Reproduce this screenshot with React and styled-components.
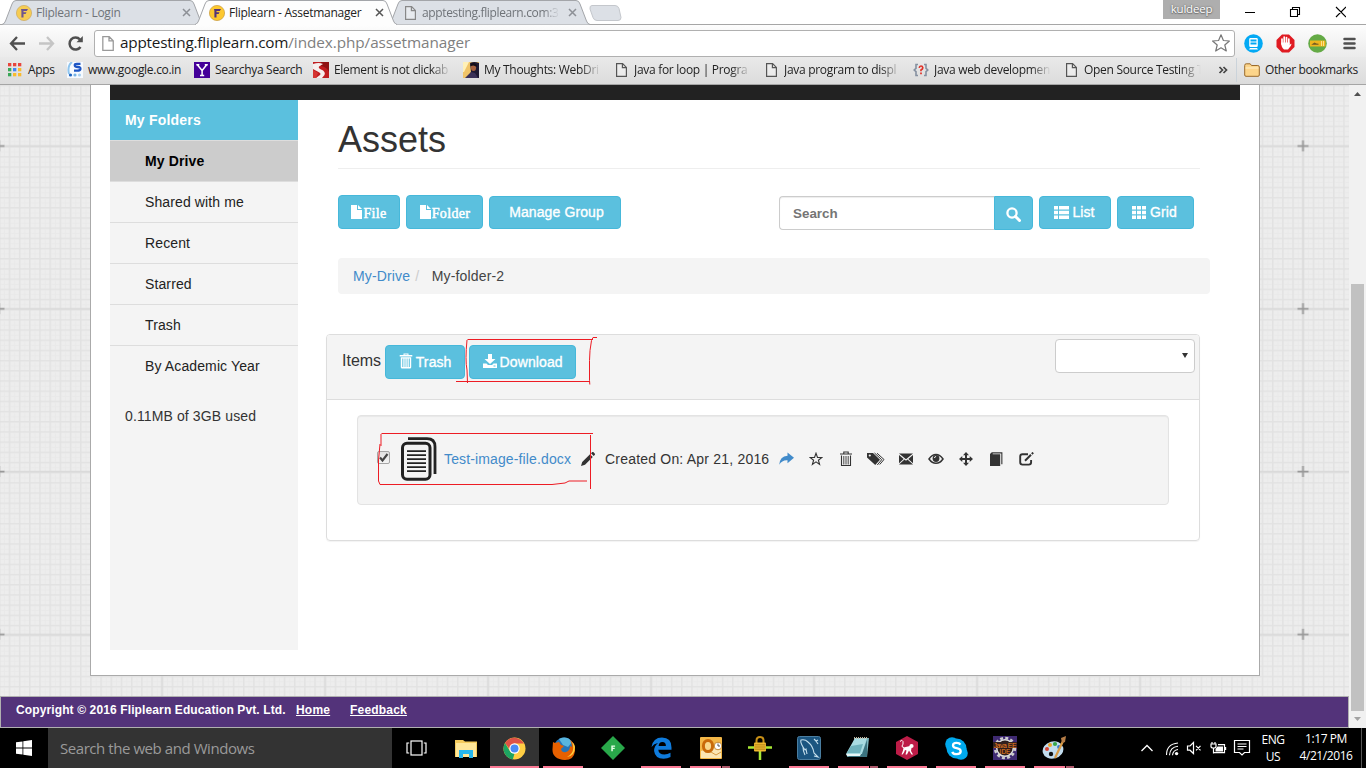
import React from "react";
import styled, { createGlobalStyle, css } from "styled-components";

const arial = `"Liberation Sans", Arial, sans-serif`;
const segoe = `"Open Sans", "Noto Sans", sans-serif`;

const GlobalStyle = createGlobalStyle`
  *, *::before, *::after { box-sizing: border-box; }
  body { margin: 0; overflow: hidden; background: #fff; font-family: ${arial}; }
  svg { display: block; flex: none; }
`;

const Screen = styled.div`
  position: relative;
  width: 1366px;
  height: 768px;
  display: flex;
  flex-direction: column;
  overflow: hidden;
`;

/* ---------- browser frame ---------- */
const TabStrip = styled.div`
  height: 25px;
  flex: none;
  display: flex;
  padding-left: 2px;
  background: #fff;
  border-bottom: 1px solid #a6a6a6;
`;
const TabBox = styled.div`
  position: relative;
  z-index: ${(p) => (p.$active ? 2 : 1)};
  width: 193px;
  height: 25px;
  flex: none;
  display: flex;
  align-items: center;
  padding-left: 14px;
  font: 12px/16px ${segoe};
  letter-spacing: ${(p) => p.$track || "-0.25px"};
  color: ${(p) => (p.$active ? "#222" : "#6f7378")};
`;
const TabShape = styled.svg`
  position: absolute;
  left: 0;
  top: 0;
  z-index: -1;
`;
const TabLabel = styled.span`
  width: 142px;
  margin: 0 4px;
  flex: none;
  white-space: nowrap;
  ${(p) => p.$fade && css`mask-image: linear-gradient(90deg, #000 85%, transparent 97%);`}
`;
const NewTab = styled.svg`
  margin: 5px 0 0 8px;
`;
const WindowControls = styled.div`
  margin-left: auto;
  padding-right: 20px;
  display: flex;
  align-items: flex-start;
`;
const UserBadge = styled.div`
  width: 57px;
  height: 19px;
  margin-right: 25px;
  background: #aeaeae;
  color: #fff;
  text-align: center;
  font: 11.5px/18px ${segoe};
  letter-spacing: -0.2px;
  text-shadow: 0 0 2px #555, 0 1px 1px #777;
`;
const Toolbar = styled.div`
  height: 32px;
  flex: none;
  display: flex;
  align-items: center;
  padding: 4px 5px 0 9px;
  background: linear-gradient(#fdfdfd, #ebebeb);
`;
const NavIcons = styled.div`
  display: flex;
  gap: 12px;
  width: 85px;
  flex: none;
`;
const AddressBar = styled.div`
  width: 1141px;
  height: 27px;
  flex: none;
  display: flex;
  align-items: center;
  padding: 0 4px 0 4px;
  border: 1px solid #b0b0b0;
  border-radius: 3px;
  background: #fff;
  font: 15.3px/24px ${segoe};
  letter-spacing: -0.2px;
  color: #1a1a1a;
`;
const Url = styled.span`
  flex: 1;
  margin-left: 4px;
  padding-bottom: 2px;
  white-space: nowrap;
`;
const UrlPath = styled.span`
  color: #808080;
  letter-spacing: -0.06px;
`;
const Extensions = styled.div`
  display: flex;
  gap: 13px;
  margin-left: 9px;
`;
const BookmarkBar = styled.div`
  height: 28px;
  flex: none;
  display: flex;
  align-items: center;
  padding: 0 0 1px 7px;
  background: linear-gradient(#e9e9e9, #dcdcdc);
  border-bottom: 1px solid #a5a5a5;
  font: 12px/16px ${segoe};
  color: #222;
`;
const Bookmark = styled.div`
  width: ${(p) => p.$w}px;
  flex: none;
  display: flex;
  align-items: center;
  gap: 5px;
`;
const BookmarkLabel = styled.span`
  width: 118px;
  flex: none;
  white-space: nowrap;
  letter-spacing: -0.3px;
  ${(p) => p.$fade && css`mask-image: linear-gradient(90deg, #000 82%, transparent 99%);`}
`;
const OtherBookmarks = styled.div`
  display: flex;
  align-items: center;
  gap: 5px;
  height: 24px;
  margin-left: 5px;
  padding-left: 7px;
  border-left: 1px solid #cbd3da;
  white-space: nowrap;
  letter-spacing: -0.38px;
`;

/* ---------- page ---------- */
const Viewport = styled.div`
  height: 643px;
  flex: none;
  display: flex;
`;
const Page = styled.div`
  position: relative;
  width: 1349px;
  display: flex;
  flex-direction: column;
  align-items: center;
  background: #ededed;
`;
const Backdrop = styled.svg`
  position: absolute;
  inset: 0;
`;
const Container = styled.div`
  position: relative;
  width: 1170px;
  height: 591px;
  margin-left: 1px;
  padding: 0 19px;
  background: #fff;
  border: solid #aaa;
  border-width: 0 1px 1px;
`;
const NavBar = styled.div`
  height: 15px;
  background: #222;
`;
const Columns = styled.div`
  display: flex;
`;
const Sidebar = styled.nav`
  width: 188px;
  height: 550px;
  background: #f4f4f4;
  font: 14px/20px ${arial};
  letter-spacing: 0.12px;
  color: #333;
`;
const SidebarTitle = styled.div`
  height: 40px;
  padding: 10px 15px;
  background: #5bc0de;
  color: #fff;
  font-weight: bold;
  letter-spacing: 0.2px;
`;
const SidebarItem = styled.div`
  height: 41px;
  padding: 10px 35px;
  border-top: 1px solid #ddd;
  color: #222;
  ${(p) => p.$active && css`background: #ccc; color: #000; font-weight: bold;`}
`;
const Usage = styled.div`
  padding: 20px 15px;
`;
const Main = styled.main`
  width: 912px;
  padding-left: 28px;
`;
const Title = styled.h1`
  width: 862px;
  height: 69px;
  margin: 0 0 0 12px;
  padding-top: 20px;
  border-bottom: 1px solid #eee;
  font: 36px/40px ${arial};
  color: #333;
`;
const Actions = styled.div`
  display: flex;
  align-items: flex-end;
  gap: 6px;
  height: 35px;
  width: 856px;
  margin: 26px 0 0 12px;
  padding-bottom: 1px;
`;
const Button = styled.button`
  width: ${(p) => p.$w}px;
  height: ${(p) => p.$h || 33}px;
  flex: none;
  display: flex;
  align-items: center;
  justify-content: center;
  gap: ${(p) => p.$gap ?? 3}px;
  padding: 0 ${(p) => p.$back || 0}px 1px ${(p) => p.$shift || 0}px;
  border: 1px solid #46b8da;
  border-radius: 4px;
  background: #5bc0de;
  color: #fff;
  font: 14px/20px ${arial};
  letter-spacing: 0.1px;
  -webkit-text-stroke: 0.35px #fff;
  ${(p) =>
    p.$serif &&
    css`
      padding-top: 5px;
      font: 14px/20px "Liberation Serif", "Times New Roman", serif;
      letter-spacing: 0.35px;
      -webkit-text-stroke: 0.5px #fff;
      svg { margin-top: -4px; }
    `}
`;
const SearchGroup = styled.div`
  display: flex;
  width: 254px;
  height: 34px;
  margin: 0 0 -1px auto;
`;
const SearchInput = styled.div`
  flex: 1;
  padding: 0 13px;
  border: 1px solid #ccc;
  border-right: 0;
  border-radius: 4px 0 0 4px;
  box-shadow: inset 0 1px 1px rgba(0, 0, 0, 0.075);
  font: bold 13.4px/33px ${arial};
  color: #757575;
`;
const SearchButton = styled(Button)`
  height: 34px;
  padding-top: 3px;
  border-radius: 0 4px 4px 0;
`;
const Breadcrumb = styled.div`
  width: 872px;
  height: 36px;
  margin: 28px 0 0 12px;
  padding: 8px 15px;
  background: #f4f4f4;
  border-radius: 4px;
  font: 14px/20px ${arial};
  letter-spacing: 0.15px;
  color: #444;
`;
const Link = styled.a`
  color: #428bca;
`;
const Slash = styled.span`
  margin: 0 12.5px 0 5px;
  color: #ccc;
`;
const Panel = styled.section`
  width: 874px;
  height: 207px;
  margin-top: 40px;
  border: 1px solid #ddd;
  border-radius: 4px;
  box-shadow: 0 1px 1px rgba(0, 0, 0, 0.05);
`;
const PanelHeader = styled.div`
  height: 65px;
  display: flex;
  align-items: flex-start;
  gap: 4px;
  padding: 10px 4px 0 15px;
  background: #f4f4f4;
  border-bottom: 1px solid #ddd;
  border-radius: 3px 3px 0 0;
  font: 16px/32px ${arial};
  color: #333;
  button svg { margin-top: -2px; }
`;
const Select = styled.div`
  width: 140px;
  height: 34px;
  margin: -6px 0 0 auto;
  padding: 0 6px 1px 0;
  display: flex;
  align-items: center;
  justify-content: flex-end;
  border: 1px solid #ccc;
  border-radius: 4px;
  background: #fff;
`;
const FileRow = styled.div`
  height: 90px;
  margin: 15px 30px 0;
  padding: 0 0 2px 19px;
  display: flex;
  align-items: center;
  background: #f4f4f4;
  border: 1px solid #e3e3e3;
  border-radius: 4px;
  box-shadow: inset 0 1px 1px rgba(0, 0, 0, 0.05);
  font: 14px/20px ${arial};
  letter-spacing: 0.2px;
  color: #333;
`;
const Checkbox = styled.span`
  width: 13px;
  height: 13px;
  margin: -3px 11px 0 0;
  border: 1px solid #a5a5a5;
  border-radius: 2px;
  background: linear-gradient(#e0e0e0, #f4f4f4);
`;
const FileName = styled(Link)`
  width: 127px;
  margin: 0 10px 0 7px;
  letter-spacing: 0.13px;
  white-space: nowrap;
`;
const Created = styled.span`
  width: 166px;
  margin-left: 10px;
  white-space: nowrap;
`;
const FileActions = styled.div`
  display: flex;
  color: #333;
`;
const FileAction = styled.span`
  width: 30px;
  display: flex;
  align-items: center;
  justify-content: center;
`;
const Footer = styled.footer`
  position: relative;
  width: 100%;
  height: 32px;
  margin-top: auto;
  padding: 5px 15px;
  display: flex;
  border: 1px solid #b0b0b0;
  background: #53337a;
  color: #fff;
  font: bold 12px/16px ${arial};
  letter-spacing: 0.12px;
`;
const FooterText = styled.span`
  width: 280px;
  white-space: nowrap;
`;
const FooterLink = styled.a`
  width: 54px;
  letter-spacing: 0.2px;
  text-decoration: underline;
`;
const Scrollbar = styled.div`
  width: 17px;
  display: flex;
  flex-direction: column;
  align-items: center;
  padding: 7px 0;
  background: #f1f1f1;
`;
const Thumb = styled.div`
  width: 13px;
  height: 427px;
  margin: auto 0 6px;
  background: #c1c1c1;
`;
const Markup = styled.svg`
  position: absolute;
  left: 370px;
  top: 330px;
  fill: none;
  stroke: #ed1c24;
`;

/* ---------- taskbar ---------- */
const Taskbar = styled.div`
  height: 40px;
  flex: none;
  display: flex;
  background: #000;
  color: #fff;
`;
const Start = styled.div`
  width: 48px;
  display: flex;
  align-items: center;
  justify-content: center;
`;
const TaskSearch = styled.div`
  width: 344px;
  padding-left: 12px;
  background: #333;
  color: #9a9a9a;
  font: 15px/40px ${segoe};
  letter-spacing: -0.44px;
`;
const Slot = styled.div`
  position: relative;
  width: 49.07px;
  display: flex;
  align-items: center;
  justify-content: center;
  background: ${(p) => (p.$current ? "#333" : "none")};
  &::after {
    content: "";
    position: absolute;
    bottom: 0;
    left: ${(p) => (p.$current ? 0 : 4)}px;
    right: ${(p) => (p.$current ? 0 : 5)}px;
    height: 2px;
    background: ${(p) =>
      !p.$open ? "none" : p.$stack ? "linear-gradient(90deg, #fb7a95 31px, #000 31px 32px, #ae5a6c 32px)" : "#fb7a95"};
  }
`;
const Tray = styled.div`
  display: flex;
  align-items: center;
  margin-left: auto;
  padding-right: 4px;
  font: 12px/17px ${segoe};
  letter-spacing: -0.45px;
  text-align: center;
`;
const TrayIcons = styled.div`
  display: flex;
  align-items: center;
  gap: 6.5px;
`;
const Language = styled.div`
  width: 44px;
  margin-top: -1px;
`;
const Clock = styled.div`
  width: 62px;
  height: 40px;
  margin-right: 4px;
  padding-top: 2px;
  letter-spacing: -0.42px;
`;
const ShowDesktop = styled.div`
  width: 1px;
  height: 40px;
  background: #555;
`;

/* ---------- icons ---------- */
const Icon = ({ s = 14, w, h, box, children, fill = "currentColor", ...rest }) => (
  <svg width={w || s} height={h || s} viewBox={box || `0 0 ${w || s} ${h || s}`} fill={fill} {...rest}>
    {children}
  </svg>
);
const FlipIcon = ({ dim }) => (
  <Icon s={16} opacity={dim ? 0.8 : 1}>
    <circle cx="8" cy="8" r="7.6" fill="#fdc82f" stroke="#c99b3c" strokeWidth=".7" />
    <path d="M5 4h7l-1.2 2H7.5v1.3h3L9.6 9H7.5v3.5H5.4V6z" fill="#53337a" />
  </Icon>
);
const PageIcon = ({ color = "#555", w = 16, h = 16 }) => (
  <Icon w={w} h={h} box="0 0 16 16" fill="none" stroke={color} strokeWidth="1.2">
    <path d="M3.6 1.6h6l3.8 3.8v9H3.6zM9.4 1.8v3.8h3.8" fill="#fff" fillOpacity=".35" />
  </Icon>
);
const CloseIcon = ({ color }) => (
  <Icon s={9} fill="none" stroke={color} strokeWidth="1.5"><path d="M1 1l7 7M8 1L1 8" /></Icon>
);
const FileGlyph = () => <Icon w={11} h={14}><path d="M0 0h6v5h5v9H0zM7 0l4 4H7z" /></Icon>;
const TrashGlyph = () => (
  <Icon w={14} h={16} box="0 0 14 16">
    <path d="M4.5 2V.5h5V2h3.800v1.500H.7V2zM5.500 2h3v-.6h-3zM1.800 4.200h10.400v10q0 1.300-1.300 1.300H3.100q-1.300 0-1.300-1.300zM3.300 5.500v8.500h1V5.500zm2.300 0v8.500h.8V5.500zm2.100 0v8.500h.8V5.500zM9.800 5.500v8.500h1V5.500z" fillRule="evenodd" />
  </Icon>
);
const DownloadGlyph = () => (
  <Icon s={14}><path d="M5 0h4v5h3.5L7 10 1.5 5H5zM0 9.5h3.5L5 11h4l1.5-1.5H14V14H0zm10.5 2v1h2v-1z" fillRule="evenodd" /></Icon>
);
const SearchGlyph = () => (
  <Icon s={15} fill="none" stroke="#fff"><circle cx="6" cy="6" r="4.6" strokeWidth="2.3" /><path d="M9.5 9.5l4 4" strokeWidth="3" strokeLinecap="round" /></Icon>
);
const ListGlyph = () => (
  <Icon w={15} h={13}><path d="M0 0h4v3.5H0zM5 0h10v3.5H5zM0 4.7h4v3.6H0zM5 4.7h10v3.6H5zM0 9.5h4V13H0zM5 9.5h10V13H5z" /></Icon>
);
const GridGlyph = () => (
  <Icon w={14} h={13}><path d="M0 0h4v3.5H0zM5 0h4v3.5H5zM10 0h4v3.5h-4zM0 4.7h4v3.6H0zM5 4.7h4v3.6H5zM10 4.7h4v3.6h-4zM0 9.5h4V13H0zM5 9.5h4V13H5zM10 9.5h4V13h-4z" /></Icon>
);
const DocumentIcon = () => (
  <Icon w={36} h={44} fill="none" stroke="#222">
    <path d="M7 1.7h19q8 0 8 8V37" strokeWidth="2.8" />
    <rect x="1.5" y="6.2" width="27.5" height="36" rx="4.5" strokeWidth="3" />
    <path d="M6 14.2h19M6 18.2h19M6 22.2h19M6 26.2h19M6 30.2h19M6 34.2h19" strokeWidth="1.8" />
  </Icon>
);
const PencilGlyph = () => (
  <Icon s={14}><path d="M0 14l1.2-4L9 2.2l2.8 2.8L4 12.8zM10 1.3L11.3 0q.5-.3 1 .1l1.6 1.6q.3.5 0 1L12.7 4z" /></Icon>
);

const fileActions = [
  <Icon key="share" fill="#428bca" w={15} h={14}><path d="M8.5.5L15 5.800l-6.500 5.400V8.200Q3 7.800.2 12.700.8 4.400 8.500 3.700z" /></Icon>,
  <Icon key="star" fill="none" stroke="#333" strokeWidth="1.1" w={14} h={14}><path d="M7 1.2l1.5 4.2 4.4.1-3.5 2.7 1.2 4.3L7 9.9l-3.6 2.6 1.2-4.3L1.1 5.5l4.4-.1z" /></Icon>,
  <Icon key="trash" w={14} h={16} fill="none" stroke="#333"><path d="M1 3h12M4.800 2.500V1h4.400v1.500M2.500 4.500V14.500h9V4.500" strokeWidth="1.1" /><path d="M4.800 5v8.500M7 5v8.500M9.200 5v8.500" strokeWidth=".9" /></Icon>,
  <Icon key="tags" w={18} h={14}><path d="M0 1h6l7 6.8L8.2 13 0 5.5zM2.8 2.4a1.1 1.1 0 100 2.2 1.1 1.1 0 000-2.2z" fillRule="evenodd" /><path d="M7.500 1l7.200 6.700L10.300 13" fill="none" stroke="#333" strokeWidth="1" /><path d="M10 1.200l7 6.300-4.300 5" fill="none" stroke="#333" strokeWidth="1" /></Icon>,
  <Icon key="mail" s={14}><path d="M0 1.5h14L7 7.2zM0 3l4.700 4L0 11.300zM14 3v8.300L9.300 7zM5.500 7.600L7 8.800l1.500-1.200 5.500 5H0z" /></Icon>,
  <Icon key="eye" w={16} h={14} fill="none" stroke="#333"><path d="M1 7q3-4.500 7-4.500T15 7q-3 4.300-7 4.300T1 7z" strokeWidth="1.500" /><circle cx="8" cy="6.500" r="3.400" fill="#333" stroke="none" /><path d="M6.400 6q.2-1.500 1.700-1.500" stroke="#fff" strokeWidth=".9" /></Icon>,
  <Icon key="move" s={14}><path d="M7 0l3 3.300H8v2.800h2.700V4L14 7l-3.300 3V8H8v2.700h2L7 14l-3-3.300h2V8H3.300v2L0 7l3.300-3v2.100H6V3.300H4z" /></Icon>,
  <Icon key="book" w={14} h={14}><path d="M2.800.3h10.600v12h-1.100V1.400H3.700v.8h7.500V14H1V2z" /></Icon>,
  <Icon key="edit" w={15} h={14} fill="none" stroke="#333"><path d="M9 2.200H3.500Q1.200 2.200 1.200 4.500v5.800q0 2.300 2.300 2.300h6.300q2.300 0 2.300-2.300V8" strokeWidth="1.900" /><path d="M6 8.800L12 2.800M12.800 2l1.400-1.400" strokeWidth="2" /></Icon>,
];

const GraphPaper = () => (
  <Backdrop width="1349" height="643">
    <defs>
      <pattern id="minor" width="10.1875" height="10.1875" patternUnits="userSpaceOnUse" x="-1.5" y="61">
        <path d="M0 0V10.2M0 0H10.2" stroke="#e2e2e2" strokeWidth="3" />
        <path d="M6 2v8M2 6h8" stroke="#e9e9e9" strokeWidth=".8" />
      </pattern>
      <pattern id="major" width="163" height="162.8" patternUnits="userSpaceOnUse" x="-82.5" y="-20.5">
        <path d="M81.5 0V163M0 81.5H163" stroke="#dadada" strokeWidth="1.6" />
        <path d="M81.5 76V87M76 81.5H87" stroke="#999" strokeWidth="1.8" />
      </pattern>
    </defs>
    <rect width="1349" height="643" fill="url(#minor)" />
    <rect width="1349" height="643" fill="url(#major)" />
  </Backdrop>
);

const Tab = ({ active, icon, label, track, fade }) => (
  <TabBox $active={active} $track={track}>
    <TabShape width="204" height="25">
      <path
        d="M0 24.5Q2.5 24 3.5 21L10 4Q11 .5 14 .5H188Q191 .5 192 4L198.5 21Q199.5 24 202 24.5"
        fill={active ? "#fdfdfd" : "#dce0e6"}
        stroke="#a3a5a9"
      />
      {active && <path d="M1 24.5H201" stroke="#fdfdfd" />}
    </TabShape>
    {icon}
    <TabLabel $fade={fade}>{label}</TabLabel>
    <CloseIcon color={active ? "#555" : "#8d9096"} />
  </TabBox>
);

const bookmarks = [
  { w: 60, label: "Apps", icon: (
    <Icon s={16}>{[0, 1, 2].map((r) => [0, 1, 2].map((c) => (
      <rect key={`${r}${c}`} x={1 + c * 5} y={1 + r * 5} width="3.3" height="3.3" fill={[["#e8453c", "#e8453c", "#e8453c"], ["#3aa757", "#4285f4", "#f9bb2d"], ["#3aa757", "#f9bb2d", "#f9bb2d"]][r][c]} />
    )))}</Icon>) },
  { w: 127, label: "www.google.co.in", icon: (
    <Icon s={16}><rect width="16" height="16" fill="#f6faff" /><path d="M5 0Q0 4 2 12" fill="none" stroke="#8fc5ee" strokeWidth="2" /><path d="M13.500 1.800H9.800Q7.500 1.800 7.800 3.500 8 4.800 11 5q2.800.3 2.400 2.100-.4 1.500-3 1.500H7" fill="none" stroke="#1d55c4" strokeWidth="2.300" /><circle cx="3.500" cy="13" r="1.600" fill="#1d66c4" /><circle cx="8" cy="13" r="1.600" fill="#74b2e6" /><circle cx="12.500" cy="13" r="1.600" fill="#a9d0f0" /></Icon>) },
  { w: 119, label: "Searchya Search", icon: (
    <Icon s={16}><rect width="16" height="16" fill="#440099" /><path d="M3.5 3l4.6 5.5L12.5 3M8.1 8v5.5M2.3 2.8h3M10.8 2.8h3M6 13.5h4.2" fill="none" stroke="#fff" strokeWidth="1.5" /></Icon>) },
  { w: 150, fade: true, label: "Element is not clickab", icon: (
    <Icon s={16}><rect width="16" height="16" fill="#c01d20" /><path d="M8 0h8v10q-2-5-8-6z" fill="#8f1213" /><path d="M0 2q6-2 10 0L6 4.500q-1 1.500 2 3 5 2 3.500 5.500L9 16H3l4-3q1.500-1.500-1.500-3L0 7z" fill="#f6efee" /><path d="M0 8l5 3-2 5H0z" fill="#d53531" /></Icon>) },
  { w: 150, fade: true, label: "My Thoughts: WebDri", icon: (
    <Icon s={16}><rect width="16" height="16" fill="#f0c469" /><path d="M0 0h6L1 10H0z" fill="#fff0b8" /><path d="M7 1q4-2 9 0v15H5l3-6z" fill="#1e1a33" /><ellipse cx="10.500" cy="5.500" rx="2.600" ry="3.500" fill="#a8623f" /><path d="M7 3q3-4 7 0l-.5 2Q11 2.500 8 4z" fill="#120d18" /><path d="M2 16l6-6 4 1 3 5z" fill="#3a3158" /></Icon>) },
  { w: 150, fade: true, label: "Java for loop | Progra", icon: <PageIcon /> },
  { w: 150, fade: true, label: "Java program to displ", icon: <PageIcon /> },
  { w: 150, fade: true, label: "Java web developmen", icon: (
    <Icon s={16} fill="none"><path d="M5 2.5H3v3.8L1.2 8 3 9.7v3.8h2M11 2.5h2v3.8L14.8 8 13 9.7v3.8h-2" stroke="#8590a0" strokeWidth="1.6" /><path d="M6.2 5.8Q6.5 4 8 4t1.8 1.7Q9.8 7 8 8v1.3M8 10.5v1.800" stroke="#e03128" strokeWidth="1.7" /></Icon>) },
  { w: 153, fade: true, label: "Open Source Testing T", icon: <PageIcon /> },
];

const apps = [
  { icon: <Icon w={22} h={16} fill="none" stroke="#fff" strokeWidth="1.2"><rect x="5" y="1" width="11" height="14" /><path d="M3.200 3H1v10h2.200M17.800 3H20v10h-2.200" /></Icon> },
  { icon: <Icon w={22} h={19}><path d="M0 1h8l2 1.5h12V18H0z" fill="#f5cb5c" /><path d="M1 4h20v14H1z" fill="#ffe79a" /><path d="M4 19v-8h14v8h-4v-4H8v4z" fill="#26b7ee" /></Icon> },
  { current: true, open: true, icon: <Icon s={23}><circle cx="11.5" cy="11.5" r="11" fill="#ffce44" /><path d="M2 6A11 11 0 0121 6.5H11.5L8 14z" fill="#de5246" /><path d="M2 6l5.5 9 4 1.5L9.8 22.4A11 11 0 012 6z" fill="#1da462" /><circle cx="11.5" cy="11.5" r="5.2" fill="#fff" /><circle cx="11.5" cy="11.5" r="4" fill="#4a8af4" /></Icon> },
  { open: true, icon: <Icon s={23}><circle cx="12" cy="11" r="10.4" fill="#2574b8" /><path d="M7 2q8-4 13 3l-4 5-5-2z" fill="#58b5df" /><path d="M1 5l2 1 4-1 2 3 3 1-3 3q1 4 5 3 4-1 4-6l2 1q0-4-2-7 6 4 5 11-1 9-10 9Q0 22 .5 12z" fill="#e66000" /><path d="M20 5q4 10-5 15 8-1 8-10 0-3-3-5z" fill="#ffcb3c" /></Icon> },
  { icon: <Icon s={24}><path d="M12 0l12 12-12 12L0 12z" fill="#29a84a" /><path d="M10.300 9.500h3.800v1.300h-2.300v1h1.900v1.300h-1.900v2.200h-1.500z" fill="#e8ffe8" /></Icon> },
  { open: true, icon: <Icon w={21} h={22}><path d="M.5 10Q2 .5 11 .5q9.5 0 9.5 10v2.3H7.3q.3 4.7 6.2 4.7 3 0 6-1.7v4.3q-3 1.6-7 1.6-8.5 0-9.4-7.6Q3 9 7 6 3 6.6.5 10zM7.6 9h7.3q0-4-3.5-4T7.6 9z" fill="#0f7bdc" /></Icon> },
  { open: true, stack: true, icon: <Icon s={22}><rect width="22" height="22" rx="1" fill="#f3b748" /><path d="M1 14l20-5v12H1z" fill="#fbe6b4" /><ellipse cx="8" cy="9" rx="4.600" ry="5.600" fill="#f8d78c" stroke="#c96a0a" strokeWidth="3" /><circle cx="18" cy="9" r="3.800" fill="#fff" stroke="#c58a33" /><path d="M18 6.500V9h2" stroke="#555" fill="none" /><path d="M11 15l5 3 5-3" stroke="#d89b42" fill="none" /></Icon> },
  { icon: <Icon s={24}><path d="M0 11.500h24M12 14v10" stroke="#a8e835" strokeWidth="2.500" /><path d="M8.500 8V4.500Q8.500 1 12 1t3.500 3.500V8" fill="none" stroke="#c88f16" strokeWidth="2" /><rect x="6" y="6.500" width="12" height="9" rx="1" fill="#eeb72f" /><path d="M6.500 8.800h11M6.500 11h11M6.500 13.200h11" stroke="#a87914" strokeWidth=".8" /></Icon> },
  { open: true, icon: <Icon s={24}><rect x=".5" y=".5" width="23" height="23" rx="2" fill="#1b5580" stroke="#4a7d9f" /><path d="M8 19Q6 15 6 11 3 6 4 4q4-1 7 2 5 4 6 11l4 4-4-1M6 11l2 3 1-1 1 5M17 3l2 2 2-1M19 5l2 3" stroke="#c5dfec" fill="none" strokeWidth="1.100" /></Icon> },
  { open: true, stack: true, icon: <Icon w={24} h={22}><path d="M9 1h14l-2 19H1z" fill="#7bb5bd" /><path d="M9 1h12l-5 16H0z" fill="#a9dce2" /><path d="M0 17h16l5-14v17H3z" fill="#3c7480" /><path d="M5 9l12-2-3 9H1z" fill="#6fb3bd" /><path d="M0 17h15l-1 2H1z" fill="#e8f6f6" /><path d="M8 1h14" stroke="#bcb5a2" strokeWidth="2" strokeDasharray="1 1" /></Icon> },
  { open: true, icon: <Icon w={22} h={24}><path d="M11 0l11 6v12l-11 6L0 18V6z" fill="#bd1c47" /><path d="M4 5.500Q6 3 7 5.500q.5 3-1 4.500 0 1.500 2 1.500" stroke="#fff" strokeWidth="1" fill="none" /><path d="M7.500 11.500l6.500-1.500 1.500 2-.5 3 2 3.500h-1.500L13 14.500l-2 4H9.500l1-4-1.500-.5-1 2.500-1.500 2H5.500l1.500-4z" fill="#fff" /><circle cx="15.500" cy="10" r="2.100" fill="#fff" /></Icon> },
  { open: true, icon: <Icon s={23}><circle cx="7" cy="7" r="6.8" fill="#00a9ed" /><circle cx="16" cy="16" r="6.8" fill="#00a9ed" /><circle cx="11.5" cy="11.5" r="10" fill="#00a9ed" /><path d="M15.4 7.6Q14.4 5.8 11.5 5.8 8 5.8 8 8.4q0 2 3.7 2.8 4 .8 4 3.1 0 2.9-4 2.9-3.6 0-4.4-2.4" fill="none" stroke="#fff" strokeWidth="2.3" /></Icon> },
  { open: true, icon: <Icon s={24}><rect width="24" height="24" fill="#3f2a72" /><circle cx="12" cy="12" r="10" fill="none" stroke="#ccc" strokeWidth="2.500" strokeDasharray="3 2.230" /><circle cx="12" cy="12" r="8.300" fill="#2c1c1c" stroke="#ddd" strokeWidth="1.500" /><path d="M0 6h24v6H0z" fill="#33211f" /><text x="12" y="11.500" fill="#f58220" fontSize="6.800" textAnchor="middle" fontFamily="Liberation Sans" textLength="23">Java EE</text><text x="12" y="17.500" fill="#f58220" fontSize="6.500" textAnchor="middle" fontFamily="Liberation Sans">IDE</text></Icon> },
  { open: true, stack: true, icon: <Icon w={25} h={24}><ellipse cx="11" cy="14" rx="10.5" ry="8.5" fill="#c2dcee" transform="rotate(-15 11 14)" /><circle cx="5" cy="13" r="2" fill="#d84332" /><circle cx="8" cy="9" r="2" fill="#eca329" /><circle cx="13" cy="8" r="2.1" fill="#35a649" /><circle cx="17" cy="11" r="1.9" fill="#3278cc" /><circle cx="9" cy="18" r="2.2" fill="#111" /><path d="M22 3l-9 19" stroke="#d99b45" strokeWidth="2.2" /><path d="M20 7l-1-5 5-2-1 6z" fill="#b67d47" /></Icon> },
];

export default function App() {
  return (
    <Screen>
      <GlobalStyle />
      <TabStrip>
        <Tab icon={<FlipIcon dim />} label="Fliplearn - Login" />
        <Tab active icon={<FlipIcon />} label="Fliplearn - Assetmanager" />
        <Tab icon={<PageIcon color="#888" />} label="apptesting.fliplearn.com:3" track="-0.36px" fade />
        <NewTab width="34" height="17"><path d="M3 .5h23q3 0 4 3l2 9q0 3-3 3H8q-3 0-4-3L1 4Q.5.5 3 .5z" fill="#dce0e6" stroke="#c4c7cc" /></NewTab>
        <WindowControls>
          <UserBadge>kuldeep</UserBadge>
          <Icon w={101} h={24} fill="none" stroke="#000" strokeWidth="1.1">
            <path d="M0 12.5h10M45.5 9.5h7v7h-7zM47.5 9.5v-2h7v7h-2M91 7l10 10M101 7L91 17" />
          </Icon>
        </WindowControls>
      </TabStrip>
      <Toolbar>
        <NavIcons>
          <Icon s={17} fill="none" stroke="#505050" strokeWidth="2.3"><path d="M8 2L2 8.5 8 15M2 8.5h14" /></Icon>
          <Icon s={17} fill="none" stroke="#c5c5c5" strokeWidth="2.3"><path d="M9 2l6 6.5L9 15M15 8.5H1" /></Icon>
          <Icon s={17} fill="none" stroke="#505050" strokeWidth="2.5"><path d="M13.5 12A6 6 0 1113 4.5" /><path d="M9.5 7.2h6.3V1z" fill="#505050" stroke="none" /></Icon>
        </NavIcons>
        <AddressBar>
          <PageIcon color="#999" w={17} h={17} />
          <Url>apptesting.fliplearn.com<UrlPath>/index.php/assetmanager</UrlPath></Url>
          <Icon s={18} fill="none" stroke="#777" strokeWidth="1.2"><path d="M9 .8l2.4 5.7 6 .5-4.6 4 1.5 6L9 13.8 3.7 17l1.5-6-4.6-4 6-.5z" strokeLinejoin="round" /></Icon>
        </AddressBar>
        <Extensions>
          <Icon s={19}><circle cx="9.5" cy="9.5" r="9.3" fill="#03a9f4" /><path d="M6.500 4h6q1.300 0 1.300 1.300v6.400q0 1.300-1.300 1.300h-6q-1.300 0-1.300-1.300V5.300Q5.200 4 6.500 4zm0 1.600v2h6v-2zm0 3v2h6v-2zM6 14h7l1 1.500H5z" fill="#fff" fillRule="evenodd" /></Icon>
          <Icon s={19}><path d="M6 .5h7L18.5 6v7L13 18.5H6L.5 13V6z" fill="#e01b22" /><path d="M6 10V5M8.2 9V3M10.5 9V3.5M12.8 10V5" stroke="#fff" strokeWidth="1.7" strokeLinecap="round" /><path d="M5.2 8.5h8.4V11l1.5-1.4q.8 1-.4 2.4L12 15.5H8q-2.8-2-2.8-7z" fill="#fff" /></Icon>
          <Icon s={19}><circle cx="9.5" cy="9.5" r="9.3" fill="#64aa45" /><path d="M2 6.5h15.5v6H2z" fill="#efb51e" /><path d="M3.5 10.5l3-2 2 1 2 .2v1h-7z" fill="#725b24" /><path d="M13.5 7v5M15.5 7v5" stroke="#fbe08b" /></Icon>
          <Icon w={19} h={19} stroke="#505050" strokeWidth="2.5" strokeLinecap="round"><path d="M4.500 5h10M4.500 9.500h10M4.500 14h10" /></Icon>
        </Extensions>
      </Toolbar>
      <BookmarkBar>
        {bookmarks.map((b) => (
          <Bookmark key={b.label} $w={b.w}>
            {b.icon}
            <BookmarkLabel $fade={b.fade}>{b.label}</BookmarkLabel>
          </Bookmark>
        ))}
        <Icon w={15} h={12} fill="none" stroke="#444" strokeWidth="1.7"><path d="M3.5 3l3 3-3 3M7.5 3l3 3-3 3" /></Icon>
        <OtherBookmarks>
          <Icon w={16} h={14}><path d="M.7 2.5q0-1.7 1.5-1.7h4L7.5 2.5h6.3q1.5 0 1.5 1.5v8q0 1.3-1.3 1.3H2Q.7 13.3.7 12z" fill="#fcd58b" stroke="#9a6a2c" /><path d="M1.5 5h13" stroke="#fff0cc" /></Icon>
          Other bookmarks
        </OtherBookmarks>
      </BookmarkBar>

      <Viewport>
        <Page>
          <GraphPaper />
          <Container>
            <NavBar />
            <Columns>
              <Sidebar>
                <SidebarTitle>My Folders</SidebarTitle>
                <SidebarItem $active>My Drive</SidebarItem>
                <SidebarItem>Shared with me</SidebarItem>
                <SidebarItem>Recent</SidebarItem>
                <SidebarItem>Starred</SidebarItem>
                <SidebarItem>Trash</SidebarItem>
                <SidebarItem>By Academic Year</SidebarItem>
                <Usage>0.11MB of 3GB used</Usage>
              </Sidebar>
              <Main>
                <Title>Assets</Title>
                <Actions>
                  <Button $w={62} $h={34} $gap={1} $serif><FileGlyph />File</Button>
                  <Button $w={77} $h={34} $gap={1} $shift={1} $serif><FileGlyph />Folder</Button>
                  <Button $w={132} $shift={3}>Manage Group</Button>
                  <SearchGroup>
                    <SearchInput>Search</SearchInput>
                    <SearchButton $w={39}><SearchGlyph /></SearchButton>
                  </SearchGroup>
                  <Button $w={72} $back={1}><ListGlyph />List</Button>
                  <Button $w={77} $gap={4} $back={2}><GridGlyph />Grid</Button>
                </Actions>
                <Breadcrumb>
                  <Link>My-Drive</Link><Slash>/</Slash>My-folder-2
                </Breadcrumb>
                <Panel>
                  <PanelHeader>
                    Items
                    <Button $w={80} $h={34}><TrashGlyph />Trash</Button>
                    <Button $w={107} $h={34}><DownloadGlyph />Download</Button>
                    <Select><Icon w={6} h={5} fill="#333"><path d="M0 0h6L3 5z" /></Icon></Select>
                  </PanelHeader>
                  <FileRow>
                    <Checkbox><Icon s={11} fill="none" stroke="#444" strokeWidth="2.1"><path d="M2 5.5l2.5 3L9.500 2" /></Icon></Checkbox>
                    <DocumentIcon />
                    <FileName>Test-image-file.docx</FileName>
                    <PencilGlyph />
                    <Created>Created On: Apr 21, 2016</Created>
                    <FileActions>
                      {fileActions.map((icon) => <FileAction key={icon.key}>{icon}</FileAction>)}
                    </FileActions>
                  </FileRow>
                </Panel>
              </Main>
            </Columns>
          </Container>
          <Footer>
            <FooterText>Copyright © 2016 Fliplearn Education Pvt. Ltd.</FooterText>
            <FooterLink>Home</FooterLink>
            <FooterLink>Feedback</FooterLink>
          </Footer>
        </Page>
        <Scrollbar>
          <Icon w={7} h={4} fill="#505050"><path d="M0 4l3.5-4L7 4z" /></Icon>
          <Thumb />
          <Icon w={7} h={4} fill="#a3a3a3"><path d="M0 0h7L3.5 4z" /></Icon>
        </Scrollbar>
      </Viewport>

      <Taskbar>
        <Start><Icon s={16} fill="#fff"><path d="M0 2.3l6.5-.9v6.1H0zM7.3 1.3L16 0v7.5H7.3zM0 8.4h6.5v6.2L0 13.7zM7.3 8.4H16V16l-8.7-1.3z" /></Icon></Start>
        <TaskSearch>Search the web and Windows</TaskSearch>
        {apps.map((a, i) => (
          <Slot key={i} $current={a.current} $open={a.open} $stack={a.stack}>{a.icon}</Slot>
        ))}
        <Tray>
          <TrayIcons>
            <Icon w={14} h={16} fill="none" stroke="#fff" strokeWidth="1.3"><path d="M1.5 11L7 5.5l5.5 5.5" /></Icon>
            <Icon w={19} h={16} box="-3 0 19 16" fill="none" stroke="#fff" strokeWidth="1.1"><path d="M2.5 15Q2.5 4 14 3M5.5 15.2Q6 7 14 6.2M8.5 15.2q.5-5 5.5-5.7" /><circle cx="12.6" cy="13.6" r="1.7" fill="#fff" stroke="none" /></Icon>
            <Icon w={16} h={16} fill="none" stroke="#fff" strokeWidth="1.2"><path d="M1.5 6H4l3.5-3.5v11L4 10.2H1.5zM10 5.8l4.5 4.5M14.5 5.8L10 10.3" /></Icon>
            <Icon w={18} h={16} fill="none" stroke="#fff" strokeWidth="1.2"><path d="M3 2v2M6 2v2M2 4h5v2.5Q7 8 4.5 8T2 6.500zM4.500 8v5.500M9 4.600h6.500v8.000h-11M16.600 7v3" /><path d="M6.500 9l2-2.500H14v5H6.500z" fill="#fff" stroke="none" /></Icon>
            <Icon w={18} h={18} fill="none" stroke="#fff" strokeWidth="1.2"><path d="M1.500 1.500h15v12h-5L9 16l-2.500-2.500h-5zM4.500 5h9M4.500 7.500h9M4.500 10h6" /></Icon>
          </TrayIcons>
          <Language>ENG<br />US</Language>
          <Clock>1:17 PM<br />4/21/2016</Clock>
          <ShowDesktop />
        </Tray>
      </Taskbar>

      <Markup width="230" height="165">
        <path d="M97.500 9.500H223M97 10q-2 20 0 30l.5 13M86 51.500h134M227 7.500h-4l-1.500 3q-2 10-2 20v20l.3 4" />
        <path d="M11.500 103.500H223M11 104v12M10 114l-1.500 16v21l1.500 3.500H182l13-1.500 4-2h18M220.500 105v54" />
      </Markup>
    </Screen>
  );
}
